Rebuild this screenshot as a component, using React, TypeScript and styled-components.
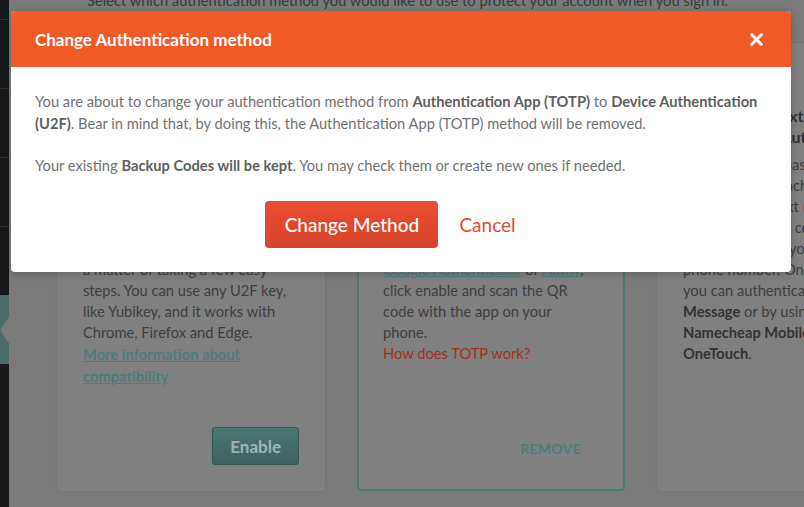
import React from "react";
import styled, { createGlobalStyle } from "styled-components";

const GlobalStyle = createGlobalStyle`
  html, body { margin: 0; padding: 0; }
  body {
    font-family: Lato, "Open Sans", Arial, sans-serif;
    background: #7a7a7a;
    overflow: hidden;
  }
  * { box-sizing: border-box; }
`;

const Page = styled.div`
  position: relative;
  display: flex;
  width: 804px;
  height: 507px;
  overflow: hidden;
  background: #7a7a7a;
`;

const Sidebar = styled.nav`
  width: 9px;
  flex: none;
  background: #17181a;
  display: flex;
  flex-direction: column;
  padding-top: 19px;
`;

const SideItem = styled.div<{ $active?: boolean }>`
  position: relative;
  height: 69px;
  border-top: 1px solid ${(p) => (p.$active ? "#4b6c69" : "#2e3033")};
  background: ${(p) => (p.$active ? "#4b6c69" : "transparent")};
  &::after {
    content: "";
    display: ${(p) => (p.$active ? "block" : "none")};
    position: absolute;
    right: 0;
    top: 21px;
    border-top: 13px solid transparent;
    border-bottom: 13px solid transparent;
    border-right: 9px solid #7a7a7a;
  }
`;

const Main = styled.main`
  flex: 1;
  padding-left: 48px;
  display: flex;
  flex-direction: column;
`;

const Intro = styled.p`
  margin: -10px 0 0 30px;
  font-size: 14.7px;
  line-height: 21px;
  color: #3a3a3a;
  white-space: nowrap;
`;

const Cards = styled.div`
  margin-top: 32px;
  display: grid;
  grid-template-columns: repeat(3, 268px);
  column-gap: 32px;
`;

const Card = styled.section<{ $selected?: boolean }>`
  height: 448px;
  background: #808080;
  border-radius: 4px;
  border: 2px solid ${(p) => (p.$selected ? "#4d7a76" : "transparent")};
  box-shadow: ${(p) => (p.$selected ? "none" : "0 0 2px rgba(0,0,0,0.12)")};
  padding: 24px;
  display: flex;
  flex-direction: column;
  white-space: nowrap;
`;

const CardTitle = styled.h3`
  margin: 36px 0 0;
  font-size: 16px;
  line-height: 21px;
  font-weight: 700;
  color: #303030;
`;

const CardBody = styled.p`
  margin: 7px 0 0;
  font-size: 14.7px;
  line-height: 21px;
  color: #3e3e3e;
  b { color: #333; font-weight: 700; }
  u { text-decoration-color: #4d7d79; color: #4d7d79; }
`;

const TealLink = styled.a`
  display: block;
  font-size: 14.7px;
  line-height: 22px;
  font-weight: 700;
  color: #4d7d79;
  text-decoration: underline;
`;

const RedLink = styled.a`
  display: block;
  font-size: 14.7px;
  line-height: 21px;
  color: #a3301f;
`;

const CardAction = styled.button<{ $variant: "solid" | "text" }>`
  margin-top: auto;
  align-self: flex-end;
  height: 38px;
  border-radius: 3px;
  font-family: inherit;
  font-weight: 700;
  cursor: pointer;
  ${(p) =>
    p.$variant === "solid"
      ? `
    padding: 0 17px;
    font-size: 17px;
    color: #9bb6b3;
    background: linear-gradient(#4c7773, #3d625f);
    border: 1px solid #35524f;
  `
      : `
    font-size: 14px;
    letter-spacing: 0.3px;
    color: #4d7d79;
    background: transparent;
    border: none;
    padding: 4px 18px 0;
  `}
`;

const Modal = styled.div`
  position: absolute;
  top: 11px;
  left: 11px;
  width: 780px;
  background: #fff;
  border-radius: 4px;
  overflow: hidden;
  box-shadow: 0 2px 8px rgba(0, 0, 0, 0.2);
`;

const ModalHeader = styled.header`
  height: 56px;
  background: #f05a28;
  display: flex;
  align-items: center;
  justify-content: space-between;
  padding: 0 28px 0 24px;
`;

const ModalTitle = styled.h2`
  margin: 0;
  font-size: 17px;
  font-weight: 700;
  color: #fff;
`;

const CloseButton = styled.button`
  width: 13px;
  height: 13px;
  padding: 0;
  border: none;
  background: none;
  display: flex;
  cursor: pointer;
`;

const ModalBody = styled.div`
  padding: 23px 24px 24px;
`;

const Para = styled.p<{ $gap?: boolean }>`
  margin: ${(p) => (p.$gap ? "20px" : "0")} 0 0;
  font-size: 14.7px;
  line-height: 22px;
  color: #727272;
  b { font-weight: 700; color: #5f5f5f; }
`;

const Actions = styled.div`
  margin-top: 25px;
  display: flex;
  justify-content: center;
  align-items: center;
`;

const PrimaryButton = styled.button`
  width: 173px;
  height: 47px;
  border: none;
  border-radius: 4px;
  background: linear-gradient(#ec4d31, #d6432c);
  color: #fff;
  font-family: inherit;
  font-size: 19px;
  font-weight: 500;
  cursor: pointer;
`;

const TextButton = styled.button`
  height: 47px;
  padding: 0 21px;
  border: none;
  background: none;
  color: #e8482e;
  font-family: inherit;
  font-size: 19px;
  cursor: pointer;
`;

export default function App() {
  return (
    <>
      <GlobalStyle />
      <Page>
        <Sidebar>
          <SideItem />
          <SideItem />
          <SideItem />
          <SideItem />
          <SideItem $active />
        </Sidebar>
        <Main>
          <Intro>
            Select which authentication method you would like to use to protect your account when you sign in.
          </Intro>
          <Cards>
            <Card>
              <CardTitle>
                Device Authentication
                <br />
                (U2F)
              </CardTitle>
              <CardBody>
                Use a physical security key to
                <br />
                sign in to your account. It is
                <br />
                the most secure two-factor
                <br />
                method we offer and setting it
                <br />
                up is easy, it's just
                <br />
                a matter of taking a few easy
                <br />
                steps. You can use any U2F key,
                <br />
                like Yubikey, and it works with
                <br />
                Chrome, Firefox and Edge.
              </CardBody>
              <TealLink>
                More information about
                <br />
                compatibility
              </TealLink>
              <CardAction $variant="solid">Enable</CardAction>
            </Card>
            <Card $selected>
              <CardTitle>
                Authentication App
                <br />
                (TOTP)
              </CardTitle>
              <CardBody>
                Generate secure one-time
                <br />
                codes with an authenticator
                <br />
                app on your smartphone. To
                <br />
                get started, download an app
                <br />
                such as one of these:
                <br />
                <u>Google Authenticator</u> or <u>Authy</u>,
                <br />
                click enable and scan the QR
                <br />
                code with the app on your
                <br />
                phone.
              </CardBody>
              <RedLink>How does TOTP work?</RedLink>
              <CardAction $variant="text">REMOVE</CardAction>
            </Card>
            <Card>
              <CardTitle>
                OneTouch &amp; Text
                <br />
                Message 2FA Authentication
              </CardTitle>
              <CardBody>
                Get a one-time passcode sent
                <br />
                to your device each time you
                <br />
                sign in. Either text messages or
                <br />
                Authy's app uses codes tied
                <br />
                associated, with your
                <br />
                phone number. Once enabled,
                <br />
                you can authenticate via <b>Text</b>
                <br />
                <b>Message</b> or by using the
                <br />
                <b>Namecheap Mobile App</b>
                <br />
                <b>OneTouch</b>.
              </CardBody>
            </Card>
          </Cards>
        </Main>

        <Modal role="dialog">
          <ModalHeader>
            <ModalTitle>Change Authentication method</ModalTitle>
            <CloseButton aria-label="Close">
              <svg width="13" height="13" viewBox="0 0 13 13">
                <path d="M1.8 1.8 L11.2 11.2 M11.2 1.8 L1.8 11.2" stroke="#fff" strokeWidth="3" strokeLinecap="square" />
              </svg>
            </CloseButton>
          </ModalHeader>
          <ModalBody>
            <Para>
              You are about to change your authentication method from <b>Authentication App (TOTP)</b> to{" "}
              <b>Device Authentication (U2F)</b>. Bear in mind that, by doing this, the Authentication App (TOTP) method
              will be removed.
            </Para>
            <Para $gap>
              Your existing <b>Backup Codes will be kept</b>. You may check them or create new ones if needed.
            </Para>
            <Actions>
              <PrimaryButton>Change Method</PrimaryButton>
              <TextButton>Cancel</TextButton>
            </Actions>
          </ModalBody>
        </Modal>
      </Page>
    </>
  );
}
